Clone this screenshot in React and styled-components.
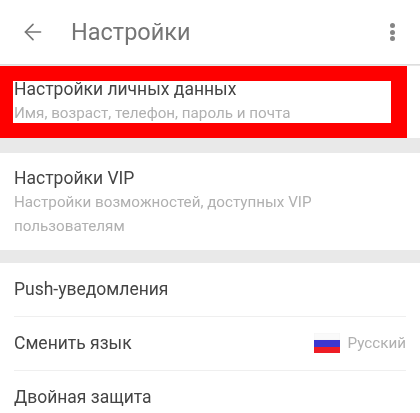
import React from 'react'
import styled, { createGlobalStyle } from 'styled-components'
import { ArrowLeft } from 'lucide-react'

const GlobalStyle = createGlobalStyle`
  html, body {
    margin: 0;
    height: 100%;
    overflow: hidden;
    background: #e9e9e9;
    font-family: Roboto, "Liberation Sans", sans-serif;
  }
`

const Page = styled.div`
  width: 420px;
  height: 413px;
  overflow: hidden;
  filter: blur(0.4px);
`
const Toolbar = styled.header`
  height: 64px;
  display: flex;
  align-items: center;
  background: #fff;
  border-bottom: 1px solid #dedede;
  padding: 0 25px 0 20px;
  color: #757575;
  margin-bottom: 1px;
`
const Title = styled.h1`
  flex: 1;
  margin: 0 0 0 25px;
  font-size: 23.5px;
  font-weight: 400;
`
const Dots = styled.div`
  display: flex;
  flex-direction: column;
  gap: 1.5px;
`
const Dot = styled.span`
  width: 5px;
  height: 5px;
  border-radius: 50%;
  background: #858585;
`
const Section = styled.section`
  position: relative;
  background: #fff;
  margin-bottom: ${(p) => p.$gap || 13}px;
  padding: ${(p) => p.$padding || '0 14px'};
`
const Highlight = styled.div`
  position: absolute;
  left: 0;
  top: 0;
  width: 378px;
  height: 42px;
  border: solid #fe0000;
  border-width: 15px 16px 15px 13px;
`
const ItemTitle = styled.div`
  font-size: 17.5px;
  line-height: 24px;
  color: #444;
`
const ItemText = styled.div`
  font-size: 15.2px;
  line-height: 24px;
  color: #b0b0b0;
`
const Row = styled.div`
  height: 52px;
  padding-bottom: 1px;
  display: flex;
  align-items: center;
  justify-content: space-between;
  border-bottom: 1px solid #efefef;
  &:last-child {
    border-bottom: none;
  }
`
const Lang = styled.div`
  display: flex;
  align-items: center;
  gap: 8px;
  font-size: 15.2px;
  color: #b0b0b0;
`
const Flag = styled.svg`
  width: 26px;
  height: 20px;
  display: block;
`

const App = () => {
  return (
    <Page>
      <GlobalStyle />
      <Toolbar>
        <ArrowLeft size={26} strokeWidth={1.5} />
        <Title>Настройки</Title>
        <Dots>
          <Dot />
          <Dot />
          <Dot />
        </Dots>
      </Toolbar>
      <Section $padding="11px 14px 13px" $gap={15}>
        <ItemTitle>Настройки личных данных</ItemTitle>
        <ItemText>Имя, возраст, телефон, пароль и почта</ItemText>
        <Highlight />
      </Section>
      <Section $padding="13px 14px 12px">
        <ItemTitle>Настройки VIP</ItemTitle>
        <ItemText>
          Настройки возможностей, доступных VIP
          <br />
          пользователям
        </ItemText>
      </Section>
      <Section $padding="0 14px">
        <Row>
          <ItemTitle>Push-уведомления</ItemTitle>
        </Row>
        <Row>
          <ItemTitle>Сменить язык</ItemTitle>
          <Lang>
            <Flag viewBox="0 0 26 20">
              <rect width="26" height="7" fill="#fafafa" stroke="#eeeeee" strokeWidth="0.5" />
              <rect y="7" width="26" height="7" fill="#3c37d0" />
              <rect y="14" width="26" height="6" fill="#ee1c25" />
            </Flag>
            Русский
          </Lang>
        </Row>
        <Row>
          <ItemTitle>Двойная защита</ItemTitle>
        </Row>
      </Section>
    </Page>
  )
}

export default App
